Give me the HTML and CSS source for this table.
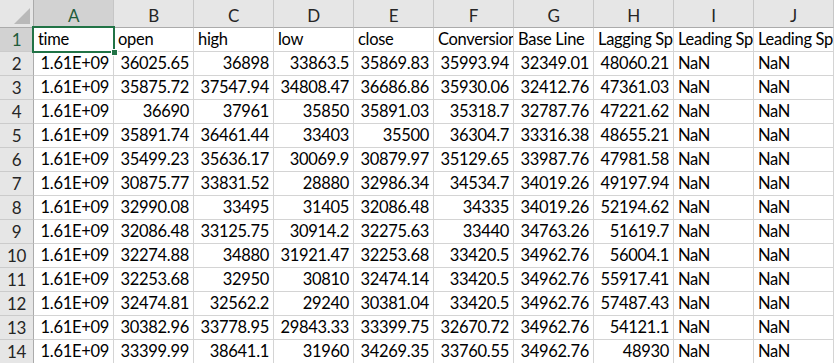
FILE: index.html
```html
<!DOCTYPE html>
<html>
<head>
<meta charset="utf-8">
<link rel="stylesheet" href="styles.css">
</head>
<body>
<div class="sheet">
  <div class="corner"><span class="tri"></span></div>
  <div class="ch on">A</div><div class="ch">B</div><div class="ch">C</div><div class="ch">D</div><div class="ch">E</div><div class="ch">F</div><div class="ch">G</div><div class="ch">H</div><div class="ch">I</div><div class="ch">J</div>

  <div class="rh on">1</div><div class="t">time</div><div class="t">open</div><div class="t">high</div><div class="t">low</div><div class="t">close</div><div class="t">Conversion Line</div><div class="t">Base Line</div><div class="t">Lagging Span</div><div class="t">Leading Span A</div><div class="t">Leading Span B</div>

  <div class="rh">2</div><div class="n">1.61E+09</div><div class="n">36025.65</div><div class="n">36898</div><div class="n">33863.5</div><div class="n">35869.83</div><div class="n">35993.94</div><div class="n">32349.01</div><div class="n">48060.21</div><div class="t">NaN</div><div class="t">NaN</div>

  <div class="rh">3</div><div class="n">1.61E+09</div><div class="n">35875.72</div><div class="n">37547.94</div><div class="n">34808.47</div><div class="n">36686.86</div><div class="n">35930.06</div><div class="n">32412.76</div><div class="n">47361.03</div><div class="t">NaN</div><div class="t">NaN</div>

  <div class="rh">4</div><div class="n">1.61E+09</div><div class="n">36690</div><div class="n">37961</div><div class="n">35850</div><div class="n">35891.03</div><div class="n">35318.7</div><div class="n">32787.76</div><div class="n">47221.62</div><div class="t">NaN</div><div class="t">NaN</div>

  <div class="rh">5</div><div class="n">1.61E+09</div><div class="n">35891.74</div><div class="n">36461.44</div><div class="n">33403</div><div class="n">35500</div><div class="n">36304.7</div><div class="n">33316.38</div><div class="n">48655.21</div><div class="t">NaN</div><div class="t">NaN</div>

  <div class="rh">6</div><div class="n">1.61E+09</div><div class="n">35499.23</div><div class="n">35636.17</div><div class="n">30069.9</div><div class="n">30879.97</div><div class="n">35129.65</div><div class="n">33987.76</div><div class="n">47981.58</div><div class="t">NaN</div><div class="t">NaN</div>

  <div class="rh">7</div><div class="n">1.61E+09</div><div class="n">30875.77</div><div class="n">33831.52</div><div class="n">28880</div><div class="n">32986.34</div><div class="n">34534.7</div><div class="n">34019.26</div><div class="n">49197.94</div><div class="t">NaN</div><div class="t">NaN</div>

  <div class="rh">8</div><div class="n">1.61E+09</div><div class="n">32990.08</div><div class="n">33495</div><div class="n">31405</div><div class="n">32086.48</div><div class="n">34335</div><div class="n">34019.26</div><div class="n">52194.62</div><div class="t">NaN</div><div class="t">NaN</div>

  <div class="rh">9</div><div class="n">1.61E+09</div><div class="n">32086.48</div><div class="n">33125.75</div><div class="n">30914.2</div><div class="n">32275.63</div><div class="n">33440</div><div class="n">34763.26</div><div class="n">51619.7</div><div class="t">NaN</div><div class="t">NaN</div>

  <div class="rh">10</div><div class="n">1.61E+09</div><div class="n">32274.88</div><div class="n">34880</div><div class="n">31921.47</div><div class="n">32253.68</div><div class="n">33420.5</div><div class="n">34962.76</div><div class="n">56004.1</div><div class="t">NaN</div><div class="t">NaN</div>

  <div class="rh">11</div><div class="n">1.61E+09</div><div class="n">32253.68</div><div class="n">32950</div><div class="n">30810</div><div class="n">32474.14</div><div class="n">33420.5</div><div class="n">34962.76</div><div class="n">55917.41</div><div class="t">NaN</div><div class="t">NaN</div>

  <div class="rh">12</div><div class="n">1.61E+09</div><div class="n">32474.81</div><div class="n">32562.2</div><div class="n">29240</div><div class="n">30381.04</div><div class="n">33420.5</div><div class="n">34962.76</div><div class="n">57487.43</div><div class="t">NaN</div><div class="t">NaN</div>

  <div class="rh">13</div><div class="n">1.61E+09</div><div class="n">30382.96</div><div class="n">33778.95</div><div class="n">29843.33</div><div class="n">33399.75</div><div class="n">32670.72</div><div class="n">34962.76</div><div class="n">54121.1</div><div class="t">NaN</div><div class="t">NaN</div>

  <div class="rh">14</div><div class="n">1.61E+09</div><div class="n">33399.99</div><div class="n">38641.1</div><div class="n">31960</div><div class="n">34269.35</div><div class="n">33760.55</div><div class="n">34962.76</div><div class="n">48930</div><div class="t">NaN</div><div class="t">NaN</div>

  <div class="sel"><span class="handle"></span></div>
</div>
</body>
</html>
```

FILE: styles.css
```css
html, body {
  margin: 0;
  padding: 0;
  background: #ffffff;
}

.sheet {
  position: relative;
  display: grid;
  grid-template-columns: 34px repeat(10, 80px);
  grid-template-rows: 28px repeat(14, 24px);
  width: 834px;
  height: 363px;
  overflow: hidden;
  font-family: Lato, "Open Sans", sans-serif;
  font-size: 16.5px;
  letter-spacing: -0.3px;
  color: #000;
}

.sheet > div {
  box-sizing: border-box;
  border-right: 1px solid #d4d4d4;
  border-bottom: 1px solid #d4d4d4;
  line-height: 23px;
  white-space: nowrap;
  overflow: hidden;
  padding: 0 4px;
}

.t { text-align: left; }
.n { text-align: right; }

.corner {
  position: relative;
  background: #e6e6e6;
  border-right: 1px solid #ababab !important;
  border-bottom: 1px solid #ababab !important;
}

.tri {
  position: absolute;
  right: 3px;
  bottom: 3px;
  width: 0;
  height: 0;
  border-style: solid;
  border-width: 0 0 16px 16px;
  border-color: transparent transparent #b9b9b9 transparent;
}

.ch {
  background: #e6e6e6;
  text-align: center;
  padding-top: 4px !important;
  color: #262626;
  font-size: 17px;
  border-right: 1px solid #c6c6c6 !important;
  border-bottom: 1px solid #ababab !important;
  background-clip: padding-box;
}

.rh {
  background: #e6e6e6;
  text-align: center;
  color: #262626;
  font-size: 17px;
  padding: 0 !important;
  border-right: 1px solid #ababab !important;
  border-bottom: 1px solid #cbcbcb !important;
}

.ch.on, .rh.on {
  background: #d2d2d2;
  color: #1f5c3b;
}

.sel {
  position: absolute;
  left: 32px;
  top: 26px;
  width: 83px;
  height: 27px;
  box-sizing: border-box;
  border: 2px solid #217346 !important;
  padding: 0 !important;
  overflow: visible !important;
}

.handle {
  position: absolute;
  right: -5px;
  bottom: -5px;
  width: 5px;
  height: 5px;
  background: #217346;
  border: 1px solid #ffffff;
}
```
